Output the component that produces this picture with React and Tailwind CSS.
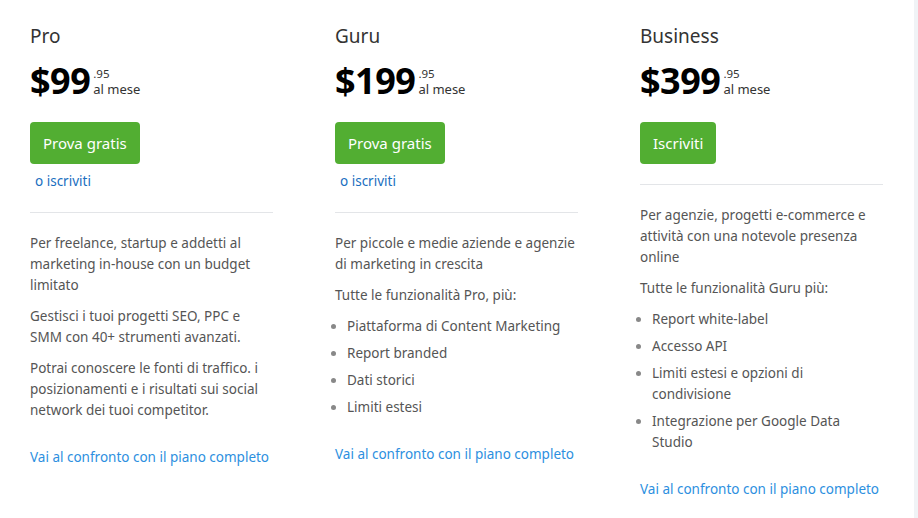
const plans = [
  {
    name: "Pro",
    price: "$99",
    button: "Prova gratis",
    sub: true,
    paras: [
      "Per freelance, startup e addetti al marketing in-house con un budget limitato",
      "Gestisci i tuoi progetti SEO, PPC e SMM con 40+ strumenti avanzati.",
      "Potrai conoscere le fonti di traffico. i posizionamenti e i risultati sui social network dei tuoi competitor.",
    ],
    items: [],
  },
  {
    name: "Guru",
    price: "$199",
    button: "Prova gratis",
    sub: true,
    paras: [
      "Per piccole e medie aziende e agenzie di marketing in crescita",
      "Tutte le funzionalità Pro, più:",
    ],
    items: [
      "Piattaforma di Content Marketing",
      "Report branded",
      "Dati storici",
      "Limiti estesi",
    ],
  },
  {
    name: "Business",
    price: "$399",
    button: "Iscriviti",
    sub: false,
    paras: [
      "Per agenzie, progetti e-commerce e attività con una notevole presenza online",
      "Tutte le funzionalità Guru più:",
    ],
    items: [
      "Report white-label",
      "Accesso API",
      "Limiti estesi e opzioni di condivisione",
      "Integrazione per Google Data Studio",
    ],
  },
];

function PlanColumn({ plan }) {
  return (
    <div className="w-[243px] flex flex-col">
      <h2 className="text-[19px] leading-[28px] text-[#333]">{plan.name}</h2>

      <div className="flex items-start mt-[10px]">
        <span className="text-[36px] leading-[42px] font-bold text-black tracking-[-0.5px]">
          {plan.price}
        </span>
        <div className="flex flex-col ml-[3px] mt-[7px] text-[#333]">
          <span className="text-[11.5px] leading-[13px]">.95</span>
          <span className="text-[13px] leading-[15px] mt-[2px]">al mese</span>
        </div>
      </div>

      <button className="self-start mt-[20px] h-[42px] px-[13px] rounded-[4px] bg-[#52ae32] text-white text-[15px] font-normal">
        {plan.button}
      </button>

      {plan.sub && (
        <a href="#" className="mt-[8px] pl-[5px] text-[13.5px] leading-[18px] text-[#1a6fbf]">
          o iscriviti
        </a>
      )}

      <div className={plan.sub ? "mt-[22px] border-t border-[#e3e5e8]" : "mt-[20px] border-t border-[#e3e5e8]"} />

      <div className="mt-[20px] text-[13.5px] leading-[21px] text-[#555] flex flex-col gap-[10px]">
        {plan.paras.map((p) => (
          <p key={p}>{p}</p>
        ))}
        {plan.items.length > 0 && (
          <ul className="list-disc pl-[12px] flex flex-col gap-[6px] marker:text-[#888]">
            {plan.items.map((it) => (
              <li key={it}>{it}</li>
            ))}
          </ul>
        )}
      </div>

      <a href="#" className="mt-[26px] text-[13.5px] leading-[21px] text-[#2d8fe0] whitespace-nowrap">
        Vai al confronto con il piano completo
      </a>
    </div>
  );
}

export default function App() {
  return (
    <div className="w-[918px] h-[518px] bg-white flex font-['Noto_Sans',sans-serif] overflow-hidden">
      <div className="flex-1 flex gap-[62px] pl-[30px] pt-[22px]">
        {plans.map((plan) => (
          <PlanColumn key={plan.name} plan={plan} />
        ))}
      </div>
      <div className="w-[4px] bg-[#f0f3f6]" />
    </div>
  );
}
